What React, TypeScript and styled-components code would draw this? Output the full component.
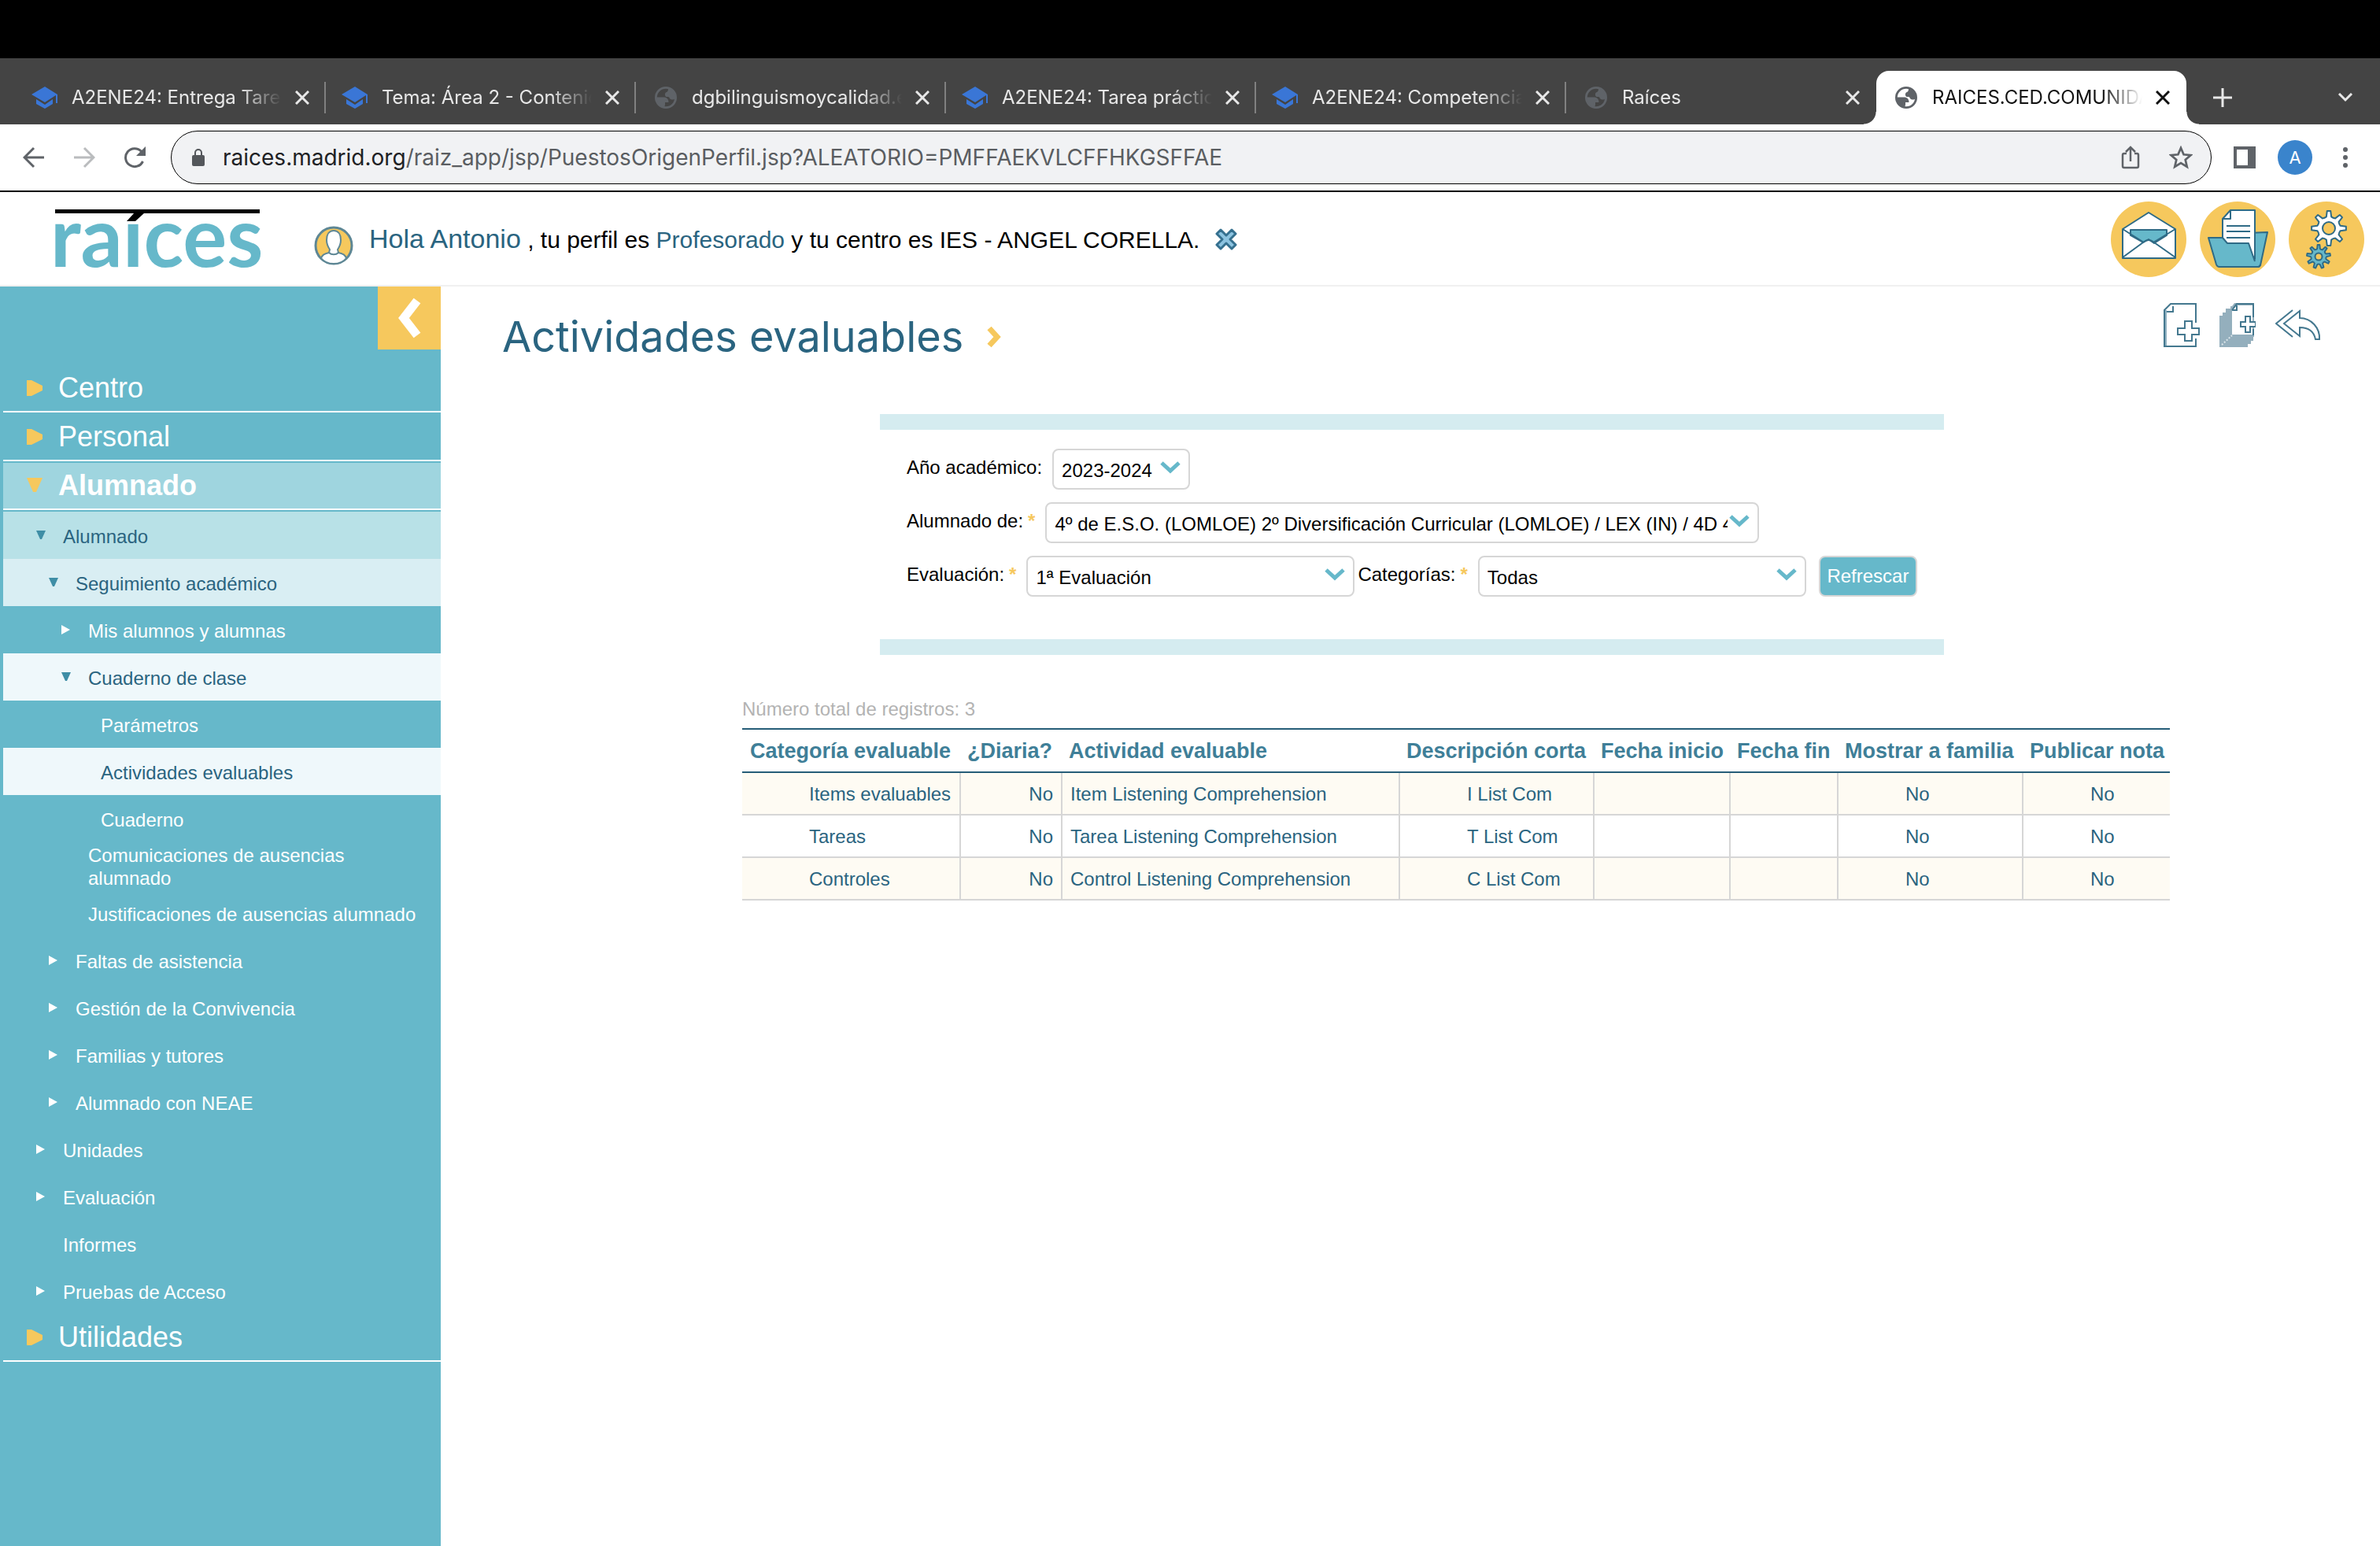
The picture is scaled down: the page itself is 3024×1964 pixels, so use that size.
import React from "react";
import styled, { createGlobalStyle, css } from "styled-components";

const color = {
  teal: "#66b8ca",
  tealDark: "#2a6480",
  yellow: "#f6c85d",
  stroke: "#2f6b86",
  muted: "#b3b3b3",
  line: "#d6d6d6",
};

const GlobalStyle = createGlobalStyle`
  *, *::before, *::after { box-sizing: border-box; }
  body { margin: 0; background: #fff; font-family: "Liberation Sans", Arial, Helvetica, sans-serif; }
  button, select { font: inherit; }
  button { border: 0; padding: 0; background: none; color: inherit; cursor: pointer; }
  a { color: inherit; text-decoration: none; }
  ul { list-style: none; margin: 0; padding: 0; }
  svg { display: block; flex: none; }
`;

/* ---------- Browser window ---------- */

const Shell = styled.div`
  display: flex;
  flex-direction: column;
  min-height: 100vh;
`;

const MenuBarGap = styled.div`
  height: 74px;
  background: #000;
`;

const TabStrip = styled.div`
  display: flex;
  align-items: flex-end;
  height: 84px;
  padding: 0 32px 0 20px;
  background: #444;
  color: #e8e8e8;
  font-family: Inter, Roboto, sans-serif;
`;

const TabList = styled.ul`
  display: flex;
  min-width: 0;
`;

const TabItem = styled.li<{ $active?: boolean; $divider?: boolean }>`
  position: relative;
  display: flex;
  align-items: center;
  flex: 0 1 394px;
  width: 394px;
  min-width: 0;
  height: 68px;
  padding: 0 21px 0 20px;
  gap: 17px;
  ${(p) =>
    p.$divider &&
    css`
      &::after {
        content: "";
        position: absolute;
        right: 0;
        top: 14px;
        width: 2px;
        height: 40px;
        background: #808080;
      }
    `}
  ${(p) =>
    p.$active &&
    css`
      background: #fff;
      color: #111;
      border-radius: 16px 16px 0 0;
      &::before,
      &::after {
        content: "";
        position: absolute;
        bottom: 0;
        width: 16px;
        height: 16px;
      }
      &::before {
        right: 100%;
        background: radial-gradient(circle at 0 0, transparent 15px, #fff 16px);
      }
      &::after {
        left: 100%;
        background: radial-gradient(circle at 100% 0, transparent 15px, #fff 16px);
      }
    `}
`;

const TabTitle = styled.button`
  flex: 1;
  min-width: 0;
  overflow: hidden;
  white-space: nowrap;
  text-align: left;
  font-size: 24px;
  line-height: 32px;
  mask-image: linear-gradient(to right, #000 calc(100% - 52px), transparent);
`;

const IconButton = styled.button<{ $size: number; $color?: string }>`
  display: flex;
  align-items: center;
  justify-content: center;
  flex: none;
  width: ${(p) => p.$size}px;
  height: ${(p) => p.$size}px;
  color: ${(p) => p.$color || "inherit"};
`;

const StripButton = styled(IconButton)<{ $end?: boolean }>`
  align-self: center;
  margin-left: ${(p) => (p.$end ? "auto" : "34px")};
  margin-top: 16px;
`;

const Toolbar = styled.div`
  display: flex;
  align-items: center;
  gap: 28px;
  height: 86px;
  padding: 0 30px 0 25px;
  border-bottom: 2px solid #000;
  color: #5f6368;
  font-family: Inter, Roboto, sans-serif;
`;

const AddressBar = styled.div`
  display: flex;
  align-items: center;
  flex: 1;
  min-width: 0;
  height: 68px;
  padding: 0 20px 0 25px;
  gap: 22px;
  border: 1px solid #000;
  border-radius: 34px;
  background: #f1f2f4;
`;

const Url = styled.div`
  flex: 1;
  min-width: 0;
  overflow: hidden;
  white-space: nowrap;
  font-size: 28px;
  line-height: 36px;
  color: #5a5d61;
  outline: none;
`;

const UrlHost = styled.span`
  color: #202124;
`;

const AddressActions = styled.div`
  display: flex;
  gap: 28px;
`;

const Avatar = styled.button`
  width: 44px;
  height: 44px;
  border-radius: 50%;
  background: #3a84cc;
  color: #fff;
  font-size: 22px;
  line-height: 44px;
`;

/* ---------- Application header ---------- */

const AppHeader = styled.header`
  display: flex;
  align-items: center;
  height: 120px;
  padding: 2px 20px 0 70px;
  border-bottom: 2px solid #f0f0f0;
`;

const LogoText = styled.text`
  font-family: Lato, sans-serif;
  font-weight: 700;
  font-size: 105px;
`;

const Greeting = styled.div`
  display: flex;
  align-items: center;
  gap: 20px;
  margin-left: 67px;
`;

const UserBadge = styled.span`
  padding-top: 16px;
`;

const GreetingText = styled.p`
  margin: 0;
  font-size: 30px;
  line-height: 40px;
  white-space: nowrap;
`;

const ProfileLink = styled.a<{ $large?: boolean }>`
  color: ${color.tealDark};
  font-size: ${(p) => (p.$large ? 34 : 30)}px;
`;

const HeaderActions = styled.div`
  display: flex;
  gap: 17px;
  margin-left: auto;
`;

/* ---------- Side menu ---------- */

const Body = styled.div`
  display: flex;
  flex: 1;
`;

const Sidebar = styled.nav`
  flex: 0 0 560px;
  background: ${color.teal};
  color: #fff;
`;

const CollapseButton = styled.button`
  display: flex;
  align-items: center;
  justify-content: center;
  width: 80px;
  height: 80px;
  margin: 0 0 20px auto;
  background: ${color.yellow};
`;

const Menu = styled.ul`
  padding-left: 4px;
`;

const SectionLink = styled.a<{ $active?: boolean }>`
  display: flex;
  align-items: center;
  gap: 20px;
  height: 60px;
  margin-bottom: 2px;
  padding-left: 30px;
  border-bottom: 2px solid #fff;
  font-size: 36px;
  line-height: 40px;
  font-weight: ${(p) => (p.$active ? 700 : 400)};
  background: ${(p) => (p.$active ? "#9fd5df" : "transparent")};
`;

const EntryLink = styled.a<{ $level: number; $bg?: string }>`
  display: flex;
  align-items: center;
  gap: 20px;
  height: 60px;
  padding: 2px 90px 0 ${(p) => 26 + 16 * p.$level}px;
  font-size: 24px;
  line-height: 29px;
  color: ${(p) => (p.$bg ? color.tealDark : "#fff")};
  background: ${(p) => p.$bg || "transparent"};
`;

const EntryText = styled.span<{ $wide?: boolean }>`
  margin-right: ${(p) => (p.$wide ? "-90px" : "0")};
`;

const Marker = styled.span`
  flex: 0 0 14px;
`;

/* ---------- Main area ---------- */

const Main = styled.main`
  flex: 1;
  min-width: 0;
`;

const PageHead = styled.div`
  display: flex;
  align-items: flex-start;
  justify-content: space-between;
  padding: 20px 75px 0 78px;
`;

const PageTitle = styled.h1`
  display: flex;
  align-items: center;
  gap: 28px;
  margin: 0;
  padding-top: 14px;
  font-family: Inter, "Open Sans", sans-serif;
  font-weight: 400;
  font-size: 54px;
  line-height: 60px;
  color: ${color.tealDark};
`;

const PageActions = styled.div`
  display: flex;
  gap: 25px;
`;

const FilterArea = styled.div`
  padding-left: 4px;
`;

const FilterForm = styled.form`
  display: flex;
  flex-direction: column;
  gap: 16px;
  max-width: 1352px;
  margin: 68px auto 0;
  padding: 24px 34px 54px;
  border: solid #d5ecf0;
  border-width: 20px 0;
  font-size: 24px;
`;

const FieldRow = styled.div`
  display: flex;
  align-items: center;
  height: 52px;
`;

const Field = styled.div`
  display: flex;
  align-items: center;
  gap: 13px;
  & + & {
    margin-left: 4px;
  }
`;

const Label = styled.label`
  padding-bottom: 4px;
  line-height: 32px;
  white-space: nowrap;
`;

const Required = styled.span`
  margin-left: 6px;
  color: ${color.yellow};
  font-weight: 700;
`;

const SelectBox = styled.div<{ $width: number }>`
  position: relative;
  width: ${(p) => p.$width}px;

  svg {
    position: absolute;
    right: 12px;
    top: 16px;
    pointer-events: none;
  }
`;

const Select = styled.select`
  appearance: none;
  display: block;
  width: 100%;
  height: 52px;
  padding: 2px 38px 0 10px;
  border: 2px solid ${color.line};
  border-radius: 8px;
  background: #fff;
  color: #000;
  font-size: 24px;
  text-overflow: clip;
`;

const RefreshButton = styled.button`
  height: 52px;
  width: 127px;
  margin-left: 16px;
  border: 2px solid ${color.line};
  border-radius: 8px;
  background: ${color.teal};
  color: #fff;
  font-size: 24px;
`;

const ResultsArea = styled.div`
  padding-left: 116px;
`;

const Results = styled.section`
  display: flex;
  flex-direction: column;
  max-width: 1814px;
  margin: 53px auto 0;
`;

const RecordCount = styled.p`
  margin: 0 0 8px;
  font-size: 24px;
  line-height: 32px;
  color: ${color.muted};
`;

const Table = styled.table`
  width: 100%;
  table-layout: fixed;
  border-collapse: separate;
  border-spacing: 0;
  color: ${color.tealDark};
  font-size: 24px;
`;

const HeadCell = styled.th`
  height: 57px;
  padding: 2px 0 0 10px;
  border: solid #265d78;
  border-width: 2px 0;
  color: #3f7f98;
  font-size: 27px;
  text-align: left;
  white-space: nowrap;
`;

const Row = styled.tr`
  &:nth-child(odd) {
    background: #fefbf3;
  }
`;

const Cell = styled.td<{ $indent?: boolean; $right?: boolean }>`
  height: 54px;
  padding: 2px 10px 0 ${(p) => (p.$indent ? 85 : 10)}px;
  border-bottom: 2px solid ${color.line};
  border-left: 2px solid ${color.line};
  text-align: ${(p) => (p.$right ? "right" : "left")};
  white-space: nowrap;
  &:first-child {
    border-left: 0;
  }
`;

/* ---------- Icons ---------- */

const GradCap = () => (
  <svg width="34" height="28" viewBox="0 0 34 28" fill="#3a76d6">
    <path d="M17 0 0 10l17 10 14-9v10h2V10z" />
    <path d="M6 16v6l11 6 10-6v-6l-10 7z" />
  </svg>
);

const Globe = () => (
  <svg width="34" height="32" viewBox="-4 -2 34 32" fill="#5f6368">
    <circle cx="14" cy="14" r="12.600" fill="none" stroke="#5f6368" strokeWidth="2.800" />
    <path d="M2 13.500h9c4.500 0 6.500 2.500 6.500 6.500H13v3q0 2-2 4A13 13 0 0 1 2 13.500z" />
    <path d="M17 2a13 13 0 0 1 9.500 13c-2 1.800-4.500 2-6.500 1-1.500-.8-1-2.500-3-3h-2.500c-2-1-2-4.500-.5-5.500 2.500-1 3-2 3-5.500z" />
  </svg>
);

const CloseX = () => (
  <svg width="18" height="18" viewBox="0 0 18 18" stroke="currentColor" strokeWidth="3">
    <path d="m1 1 16 16M17 1 1 17" />
  </svg>
);

const Plus = () => (
  <svg width="24" height="24" viewBox="0 0 24 24" stroke="currentColor" strokeWidth="3">
    <path d="M12 0v24M0 12h24" />
  </svg>
);

const TabsChevron = () => (
  <svg width="20" height="12" viewBox="0 0 20 12" fill="none" stroke="currentColor" strokeWidth="3">
    <path d="m2 1 8 8 8-8" />
  </svg>
);

const Arrow = ({ flip }: { flip?: boolean }) => (
  <svg width="28" height="28" viewBox="0 0 28 28" fill="none" stroke="currentColor" strokeWidth="3">
    <path d={flip ? "M1 14h25M14 2l12 12-12 12" : "M27 14H2M14 2 2 14l12 12"} />
  </svg>
);

const Reload = () => (
  <svg width="28" height="28" viewBox="0 0 28 28">
    <path d="M24.500 19A11.500 11.500 0 1 1 22.500 6.300" fill="none" stroke="currentColor" strokeWidth="3" />
    <path d="M28 0v12H16z" fill="currentColor" />
  </svg>
);

const Lock = () => (
  <svg width="18" height="24" viewBox="0 0 18 24">
    <rect x="1" y="9" width="16" height="14" rx="2" fill="#54575b" />
    <path d="M5 10V6a4 4 0 0 1 8 0v4" fill="none" stroke="#54575b" strokeWidth="2" />
  </svg>
);

const Share = () => (
  <svg width="24" height="30" viewBox="0 0 24 30" fill="none" stroke="currentColor" strokeWidth="2.500">
    <path d="M7 10H4a2 2 0 0 0-2 2v14a2 2 0 0 0 2 2h16a2 2 0 0 0 2-2V12a2 2 0 0 0-2-2h-3M12 20V2M6 8l6-6 6 6" />
  </svg>
);

const Star = () => (
  <svg width="30" height="30" viewBox="1 1 22 22" fill="none" stroke="currentColor" strokeWidth="2">
    <path d="m12 3.200 2.600 6.100 6.600.6-5 4.300 1.500 6.500-5.700-3.500-5.700 3.500 1.500-6.500-5-4.300 6.600-.6z" />
  </svg>
);

const SidePanel = () => (
  <svg width="28" height="28" viewBox="0 0 28 28">
    <path fill="currentColor" fillRule="evenodd" d="M0 0h28v28H0zM4 4v20h14V4z" />
  </svg>
);

const Dots = () => (
  <svg width="12" height="28" viewBox="0 0 12 28" fill="currentColor">
    <circle cx="6" cy="4" r="3" />
    <circle cx="6" cy="14" r="3" />
    <circle cx="6" cy="24" r="3" />
  </svg>
);

const Logo = () => (
  <svg width="262" height="80" viewBox="0 0 262 80" role="img" aria-label="raíces">
    <rect y="2" width="260" height="5" fill="#000" />
    <path d="M101 6h13l-12 11H91z" fill="#000" />
    <LogoText x="-6" y="75" fill={color.teal}>
      raıces
    </LogoText>
  </svg>
);

const UserIcon = () => (
  <svg width="50" height="50" viewBox="0 0 50 50">
    <circle cx="25" cy="25" r="23" fill={color.yellow} stroke="#5e8795" strokeWidth="3" />
    <path
      d="M25 6c-6 0-9 5-9 12 0 6 2 9 4 12l-1 4c-5 1-9 3-10 7 4 5 10 7 16 7s12-2 16-7c-1-4-5-6-10-7l-1-4c2-3 4-6 4-12 0-7-3-12-9-12z"
      fill="#fff"
      stroke="#5e8795"
      strokeWidth="2"
    />
    <path d="M19 34c3 3 9 3 12 0" fill="none" stroke="#5e8795" strokeWidth="2" />
  </svg>
);

const LogoutX = () => (
  <svg width="28" height="28" viewBox="0 0 28 28">
    <path
      d="m7 2 7 7 7-7 5 5-7 7 7 7-5 5-7-7-7 7-5-5 7-7-7-7z"
      fill="#8cc3e0"
      stroke="#35708f"
      strokeWidth="3"
      strokeLinejoin="round"
    />
  </svg>
);

const Mail = () => (
  <svg width="96" height="96" viewBox="0 0 96 96" stroke={color.stroke} strokeWidth="2" strokeLinejoin="round">
    <circle cx="48" cy="48" r="48" fill={color.yellow} stroke="none" />
    <path d="M15 35 48 14l34 21v37H15z" fill="#fff" />
    <path d="M25 36h46v7L55 53l-7-5-7 4-16-9z" fill={color.teal} />
    <path d="m15 35 27 17M82 35 54 52M15 71l26-19q7-6 14 0l27 19" fill="none" />
  </svg>
);

const Folder = () => (
  <svg width="96" height="96" viewBox="0 0 96 96" stroke={color.stroke} strokeWidth="2" strokeLinejoin="round">
    <circle cx="48" cy="48" r="48" fill={color.yellow} stroke="none" />
    <path d="M60 40l26-1-9 42q-1 2-3 2H25z" fill={color.teal} />
    <path d="M29 22 39 11h31v62l-6-8H29z" fill="#fff" />
    <path d="M29 22h10V11" fill="none" />
    <path d="M34 31h30M34 38h30M34 46h30" />
    <path d="M11 46h18l6 7h27l8 23 6 3-2 4H25q-3 0-4-3z" fill={color.teal} stroke="none" />
    <path d="M70 76 62 53H35l-6-7H11l10 34q1 3 4 3h49q2 0 3-3" fill="none" />
  </svg>
);

const gearPath = (cx: number, cy: number, outer: number, inner: number, teeth: number) => {
  const step = (Math.PI * 2) / teeth;
  const at = (r: number, a: number) => `${(cx + r * Math.sin(a)).toFixed(2)} ${(cy - r * Math.cos(a)).toFixed(2)}`;
  let d = "";
  for (let i = 0; i < teeth; i++) {
    const a = i * step;
    d += `${i ? "L" : "M"}${at(inner, a - step * 0.27)}L${at(outer, a - step * 0.13)}L${at(outer, a + step * 0.13)}L${at(inner, a + step * 0.27)}Q${at(inner - 1, a + step * 0.5)} ${at(inner, a + step * 0.73)}`;
  }
  return d + "Z";
};

const Gears = () => (
  <svg width="96" height="96" viewBox="0 0 96 96" stroke={color.stroke} strokeWidth="2" strokeLinejoin="round">
    <circle cx="48" cy="48" r="48" fill={color.yellow} stroke="none" />
    <path d={gearPath(51, 34, 22, 15, 8)} fill="#fff" />
    <circle cx="51" cy="34" r="8" fill={color.yellow} />
    <path d={gearPath(38, 70, 15, 10, 9)} fill={color.teal} />
    <circle cx="38" cy="70" r="4.500" fill={color.yellow} />
  </svg>
);

const NewDoc = () => (
  <svg width="46" height="56" viewBox="0 0 46 56" fill="none" stroke="#44788f" strokeWidth="2">
    <path d="M0 9h4v46H0z" fill="#8fb0c0" stroke="none" />
    <path d="M41 25V1H9L1 9v46h40V45M12 4v7H4" />
    <path d="M27 23h9v9h9v8h-9v8h-9v-8h-9v-8h9z" />
  </svg>
);

const NewDocs = () => (
  <svg width="46" height="56" viewBox="0 0 46 56" fill="none" stroke="#44788f" strokeWidth="2">
    <path d="M0 16h4v-4h4V7h6V4h2l3-4h25v43h-1v5h-3v4h-4v4H0z" fill="#94afbd" stroke="none" />
    <path d="M16 9l6-6h20v37H16z" fill="#fff" stroke="none" />
    <path d="M43 18V1H22l-6 8M22 3v6h-6M43 33v8" />
    <path d="m3 53 13-12" stroke="#dce6ea" strokeDasharray="2 2" />
    <path d="M33 17h6v7h7v6h-7v7h-6v-7h-6v-6h6z" fill="#fff" />
  </svg>
);

const Undo = () => (
  <svg width="58" height="58" viewBox="0 0 58 58" fill="none" stroke="#44788f" strokeWidth="2">
    <path d="M22 10 1 27l21 17" />
    <path d="M31 11 11 27l20 16V32c11 0 18 5 20 15h5c1-14-10-27-25-27z" />
  </svg>
);

const CollapseIcon = () => (
  <svg width="30" height="52" viewBox="0 0 30 52" fill="none" stroke="#fff" strokeWidth="11">
    <path d="M25 4 8 26l17 22" />
  </svg>
);

const TitleChevron = () => (
  <svg width="22" height="28" viewBox="0 0 22 28" fill="none" stroke={color.yellow} strokeWidth="7">
    <path d="m5 3 10 11L5 25" />
  </svg>
);

const SelectChevron = () => (
  <svg width="26" height="16" viewBox="0 0 26 16" fill="none" stroke={color.teal} strokeWidth="5">
    <path d="m2 2 11 10L24 2" />
  </svg>
);

const SectionMark = ({ open }: { open?: boolean }) => (
  <svg width="20" height="20" viewBox="0 0 20 20" fill={color.yellow}>
    <path d={open ? "M0 0h20L12 18h-4z" : "M0 0h6l14 7v6L6 20H0z"} />
  </svg>
);

const EntryMark = ({ open }: { open?: boolean }) => (
  <svg width="14" height="14" viewBox="0 0 14 14" fill={open ? "#3f8ea6" : "#fff"}>
    <path d={open ? "M0 0h12L7 11H5z" : "M0 0l11 6-11 6z"} />
  </svg>
);

/* ---------- Data ---------- */

const tabs = [
  { title: "A2ENE24: Entrega Tarea", icon: "cap" },
  { title: "Tema: Área 2 - Contenidos", icon: "cap" },
  { title: "dgbilinguismoycalidad.educ", icon: "globe" },
  { title: "A2ENE24: Tarea práctica", icon: "cap" },
  { title: "A2ENE24: Competencias", icon: "cap" },
  { title: "Raíces", icon: "globe" },
  { title: "RAICES.CED.COMUNIDAD", icon: "globe" },
];

type Entry = { text: string; level: number; mark?: "open" | "closed"; bg?: string; wide?: boolean };

const entries: Entry[] = [
  { text: "Alumnado", level: 1, mark: "open", bg: "#b8e1e7" },
  { text: "Seguimiento académico", level: 2, mark: "open", bg: "#d9eef3" },
  { text: "Mis alumnos y alumnas", level: 3, mark: "closed" },
  { text: "Cuaderno de clase", level: 3, mark: "open", bg: "#eff8fb" },
  { text: "Parámetros", level: 4 },
  { text: "Actividades evaluables", level: 4, bg: "#eff8fb" },
  { text: "Cuaderno", level: 4 },
  { text: "Comunicaciones de ausencias alumnado", level: 3 },
  { text: "Justificaciones de ausencias alumnado", level: 3, wide: true },
  { text: "Faltas de asistencia", level: 2, mark: "closed" },
  { text: "Gestión de la Convivencia", level: 2, mark: "closed" },
  { text: "Familias y tutores", level: 2, mark: "closed" },
  { text: "Alumnado con NEAE", level: 2, mark: "closed" },
  { text: "Unidades", level: 1, mark: "closed" },
  { text: "Evaluación", level: 1, mark: "closed" },
  { text: "Informes", level: 1 },
  { text: "Pruebas de Acceso", level: 1, mark: "closed" },
];

const columns = [
  { name: "Categoría evaluable", width: 276 },
  { name: "¿Diaria?", width: 129 },
  { name: "Actividad evaluable", width: 429 },
  { name: "Descripción corta", width: 247 },
  { name: "Fecha inicio", width: 173 },
  { name: "Fecha fin", width: 137 },
  { name: "Mostrar a familia", width: 235 },
  { name: "Publicar nota", width: 188 },
];

const rows = [
  ["Items evaluables", "No", "Item Listening Comprehension", "I List Com", "", "", "No", "No"],
  ["Tareas", "No", "Tarea Listening Comprehension", "T List Com", "", "", "No", "No"],
  ["Controles", "No", "Control Listening Comprehension", "C List Com", "", "", "No", "No"],
];

const indented = [0, 3, 6, 7];

/* ---------- Parts ---------- */

type SelectFieldProps = { id: string; label: string; value: string; width: number; required?: boolean };

const SelectField = ({ id, label, value, width, required }: SelectFieldProps) => (
  <Field>
    <Label htmlFor={id}>
      {label}
      {required && <Required>*</Required>}
    </Label>
    <SelectBox $width={width}>
      <Select id={id} defaultValue={value}>
        <option>{value}</option>
      </Select>
      <SelectChevron />
    </SelectBox>
  </Field>
);

const Section = ({ name, open }: { name: string; open?: boolean }) => (
  <li>
    <SectionLink href="#" $active={open}>
      <SectionMark open={open} />
      {name}
    </SectionLink>
    {open && (
      <ul>
        {entries.map((e) => (
          <li key={e.text}>
            <EntryLink href="#" $level={e.level} $bg={e.bg}>
              <Marker>{e.mark && <EntryMark open={e.mark === "open"} />}</Marker>
              <EntryText $wide={e.wide}>{e.text}</EntryText>
            </EntryLink>
          </li>
        ))}
      </ul>
    )}
  </li>
);

export default function App() {
  return (
    <Shell>
      <GlobalStyle />
      <MenuBarGap />
      <TabStrip>
        <TabList>
          {tabs.map((t, i) => (
            <TabItem key={t.title} $active={i === 6} $divider={i < 5}>
              {t.icon === "cap" ? <GradCap /> : <Globe />}
              <TabTitle>{t.title}</TabTitle>
              <IconButton $size={18} aria-label="Cerrar pestaña">
                <CloseX />
              </IconButton>
            </TabItem>
          ))}
        </TabList>
        <StripButton $size={24} aria-label="Nueva pestaña">
          <Plus />
        </StripButton>
        <StripButton $size={24} $end aria-label="Buscar pestañas">
          <TabsChevron />
        </StripButton>
      </TabStrip>
      <Toolbar>
        <IconButton $size={36} aria-label="Atrás">
          <Arrow />
        </IconButton>
        <IconButton $size={36} $color="#babcbe" aria-label="Adelante">
          <Arrow flip />
        </IconButton>
        <IconButton $size={36} aria-label="Recargar">
          <Reload />
        </IconButton>
        <AddressBar>
          <Lock />
          <Url role="textbox" aria-label="Dirección" contentEditable suppressContentEditableWarning spellCheck={false}>
            <UrlHost>raices.madrid.org</UrlHost>/raiz_app/jsp/PuestosOrigenPerfil.jsp?ALEATORIO=PMFFAEKVLCFFHKGSFFAE
          </Url>
          <AddressActions>
            <IconButton $size={36} aria-label="Compartir">
              <Share />
            </IconButton>
            <IconButton $size={36} aria-label="Añadir a favoritos">
              <Star />
            </IconButton>
          </AddressActions>
        </AddressBar>
        <IconButton $size={28} aria-label="Panel lateral">
          <SidePanel />
        </IconButton>
        <Avatar>A</Avatar>
        <IconButton $size={28} aria-label="Menú">
          <Dots />
        </IconButton>
      </Toolbar>

      <AppHeader>
        <Logo />
        <Greeting>
          <UserBadge>
            <UserIcon />
          </UserBadge>
          <GreetingText>
            <ProfileLink href="#" $large>
              Hola Antonio
            </ProfileLink>{" "}
            , tu perfil es <ProfileLink href="#">Profesorado</ProfileLink> y tu centro es IES - ANGEL CORELLA.
          </GreetingText>
          <IconButton $size={28} aria-label="Salir">
            <LogoutX />
          </IconButton>
        </Greeting>
        <HeaderActions>
          <IconButton $size={96} aria-label="Mensajes">
            <Mail />
          </IconButton>
          <IconButton $size={96} aria-label="Documentos">
            <Folder />
          </IconButton>
          <IconButton $size={96} aria-label="Configuración">
            <Gears />
          </IconButton>
        </HeaderActions>
      </AppHeader>

      <Body>
        <Sidebar>
          <CollapseButton aria-label="Contraer menú">
            <CollapseIcon />
          </CollapseButton>
          <Menu>
            <Section name="Centro" />
            <Section name="Personal" />
            <Section name="Alumnado" open />
            <Section name="Utilidades" />
          </Menu>
        </Sidebar>

        <Main>
          <PageHead>
            <PageTitle>
              Actividades evaluables
              <TitleChevron />
            </PageTitle>
            <PageActions>
              <button aria-label="Nueva actividad">
                <NewDoc />
              </button>
              <button aria-label="Copiar actividades">
                <NewDocs />
              </button>
              <button aria-label="Volver">
                <Undo />
              </button>
            </PageActions>
          </PageHead>

          <FilterArea>
            <FilterForm>
              <FieldRow>
                <SelectField id="anio" label="Año académico:" value="2023-2024" width={175} />
              </FieldRow>
              <FieldRow>
                <SelectField
                  id="alumnado"
                  label="Alumnado de:"
                  value="4º de E.S.O. (LOMLOE) 2º Diversificación Curricular (LOMLOE) / LEX (IN) / 4D 4E"
                  width={907}
                  required
                />
              </FieldRow>
              <FieldRow>
                <SelectField id="evaluacion" label="Evaluación:" value="1ª Evaluación" width={417} required />
                <SelectField id="categorias" label="Categorías:" value="Todas" width={417} required />
                <RefreshButton type="button">Refrescar</RefreshButton>
              </FieldRow>
            </FilterForm>
          </FilterArea>

          <ResultsArea>
            <Results>
              <RecordCount>Número total de registros: 3</RecordCount>
              <Table>
                <colgroup>
                  {columns.map((c) => (
                    <col key={c.name} width={c.width} />
                  ))}
                </colgroup>
                <thead>
                  <tr>
                    {columns.map((c) => (
                      <HeadCell key={c.name} scope="col">
                        {c.name}
                      </HeadCell>
                    ))}
                  </tr>
                </thead>
                <tbody>
                  {rows.map((r) => (
                    <Row key={r[0]}>
                      {r.map((v, i) => (
                        <Cell key={i} $indent={indented.includes(i)} $right={i === 1}>
                          {v}
                        </Cell>
                      ))}
                    </Row>
                  ))}
                </tbody>
              </Table>
            </Results>
          </ResultsArea>
        </Main>
      </Body>
    </Shell>
  );
}
